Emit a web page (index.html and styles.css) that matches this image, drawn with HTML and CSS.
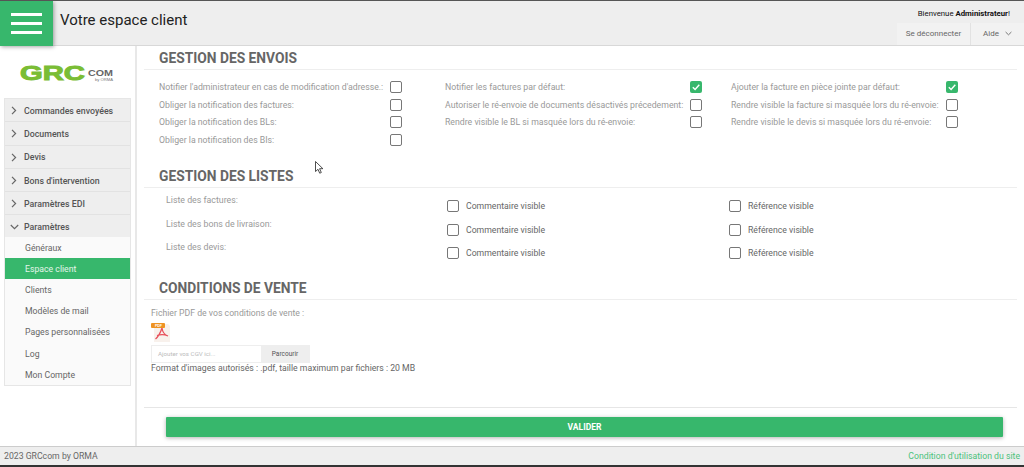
FILE: index.html
```html
<!DOCTYPE html>
<html lang="fr">
<head>
  <meta charset="UTF-8">
  <meta name="viewport" content="width=device-width, initial-scale=1.0">
  <title>Votre espace client</title>
  <link rel="stylesheet" href="styles.css">
</head>
<body>
  <header class="topbar">
    <button class="burger" type="button" aria-label="Menu">
      <span></span><span></span><span></span>
    </button>
    <div class="page-title">Votre espace client</div>
    <div class="user-box">
      <div class="welcome">Bienvenue <b>Administrateur</b>!</div>
      <div class="user-links">
        <a class="user-link logout">Se déconnecter</a>
        <a class="user-link help">Aide
          <svg class="chev" width="7" height="5" viewBox="0 0 7 5"><path d="M.6 1l2.900 2.800L6.400 1" fill="none" stroke="#777" stroke-width="1"/></svg>
        </a>
      </div>
    </div>
  </header>

  <div class="layout">
    <aside class="sidebar">
      <div class="logo">
        <svg class="logo-svg" width="100" height="26" viewBox="0 0 100 26">
          <text class="logo-grc" x="1" y="18" textLength="65" lengthAdjust="spacingAndGlyphs">GRC</text>
          <text class="logo-com" x="69" y="14" textLength="25" lengthAdjust="spacingAndGlyphs">COM</text>
          <text class="logo-by" x="76" y="18.500" textLength="18" lengthAdjust="spacingAndGlyphs">by ORMA</text>
        </svg>
      </div>
      <nav class="menu">
        <a class="menu-head"><svg class="arrow" width="6" height="9" viewBox="0 0 6 9"><path d="M1 .8l3.600 3.700L1 8.200" fill="none" stroke="#666" stroke-width="1.200"/></svg>Commandes envoyées</a>
        <a class="menu-head"><svg class="arrow" width="6" height="9" viewBox="0 0 6 9"><path d="M1 .8l3.600 3.700L1 8.200" fill="none" stroke="#666" stroke-width="1.200"/></svg>Documents</a>
        <a class="menu-head"><svg class="arrow" width="6" height="9" viewBox="0 0 6 9"><path d="M1 .8l3.600 3.700L1 8.200" fill="none" stroke="#666" stroke-width="1.200"/></svg>Devis</a>
        <a class="menu-head"><svg class="arrow" width="6" height="9" viewBox="0 0 6 9"><path d="M1 .8l3.600 3.700L1 8.200" fill="none" stroke="#666" stroke-width="1.200"/></svg>Bons d'intervention</a>
        <a class="menu-head"><svg class="arrow" width="6" height="9" viewBox="0 0 6 9"><path d="M1 .8l3.600 3.700L1 8.200" fill="none" stroke="#666" stroke-width="1.200"/></svg>Paramètres EDI</a>
        <a class="menu-head open"><svg class="arrow-down" width="9" height="6" viewBox="0 0 9 6"><path d="M.8 1l3.700 3.600L8.200 1" fill="none" stroke="#666" stroke-width="1.200"/></svg>Paramètres</a>
        <div class="submenu">
          <a class="sub-item">Généraux</a>
          <a class="sub-item active">Espace client</a>
          <a class="sub-item">Clients</a>
          <a class="sub-item">Modèles de mail</a>
          <a class="sub-item">Pages personnalisées</a>
          <a class="sub-item">Log</a>
          <a class="sub-item">Mon Compte</a>
        </div>
      </nav>
    </aside>

    <main class="content">
      <section class="block block-envois">
        <h2>GESTION DES ENVOIS</h2>
        <div class="options">
          <div class="opt-col col-a">
            <div class="opt"><span>Notifier l'administrateur en cas de modification d'adresse.:</span><i class="box"></i></div>
            <div class="opt"><span>Obliger la notification des factures:</span><i class="box"></i></div>
            <div class="opt"><span>Obliger la notification des BLs:</span><i class="box"></i></div>
            <div class="opt"><span>Obliger la notification des BIs:</span><i class="box"></i></div>
          </div>
          <div class="opt-col col-b">
            <div class="opt"><span>Notifier les factures par défaut:</span><i class="box checked"><svg width="12" height="12" viewBox="0 0 12 12"><path d="M2.800 6.200l2.300 2.300 4.200-4.800" fill="none" stroke="#fff" stroke-width="1.400"/></svg></i></div>
            <div class="opt"><span>Autoriser le ré-envoie de documents désactivés précedement:</span><i class="box"></i></div>
            <div class="opt"><span>Rendre visible le BL si masquée lors du ré-envoie:</span><i class="box"></i></div>
          </div>
          <div class="opt-col col-c">
            <div class="opt"><span>Ajouter la facture en pièce jointe par défaut:</span><i class="box checked"><svg width="12" height="12" viewBox="0 0 12 12"><path d="M2.800 6.200l2.300 2.300 4.200-4.800" fill="none" stroke="#fff" stroke-width="1.400"/></svg></i></div>
            <div class="opt"><span>Rendre visible la facture si masquée lors du ré-envoie:</span><i class="box"></i></div>
            <div class="opt"><span>Rendre visible le devis si masquée lors du ré-envoie:</span><i class="box"></i></div>
          </div>
        </div>
      </section>

      <section class="block block-listes">
        <h2>GESTION DES LISTES</h2>
        <div class="list-rows">
          <div class="list-row">
            <span class="list-name">Liste des factures:</span>
            <label class="check check-first"><i class="box"></i>Commentaire visible</label>
            <label class="check"><i class="box"></i>Référence visible</label>
          </div>
          <div class="list-row">
            <span class="list-name">Liste des bons de livraison:</span>
            <label class="check check-first"><i class="box"></i>Commentaire visible</label>
            <label class="check"><i class="box"></i>Référence visible</label>
          </div>
          <div class="list-row">
            <span class="list-name">Liste des devis:</span>
            <label class="check check-first"><i class="box"></i>Commentaire visible</label>
            <label class="check"><i class="box"></i>Référence visible</label>
          </div>
        </div>
      </section>

      <section class="block block-cgv">
        <h2>CONDITIONS DE VENTE</h2>
        <div class="cgv-body">
          <div class="cgv-label">Fichier PDF de vos conditions de vente :</div>
          <svg class="pdf-icon" width="20" height="19" viewBox="0 0 20 19">
            <path d="M3 1h14l2 2v16H3z" fill="#f8f1ec"/>
            <path d="M11 5c-1 3-3 8-6.500 11M11 5c.5 4 3 7 6 8M6 12.500c3-1 7-1.500 11 .5" fill="none" stroke="#e8505b" stroke-width="1.300"/>
            <rect x="0" y="0" width="14" height="5" rx="1" fill="#ee9322"/>
            <text class="pdf-tag" x="4" y="4">PDF</text>
          </svg>
          <div class="file-input">
            <span class="file-text">Ajouter vos CGV ici...</span>
            <span class="file-btn">Parcourir</span>
          </div>
          <div class="file-note">Format d'images autorisés : .pdf, taille maximum par fichiers : 20 MB</div>
        </div>
      </section>

      <div class="actions">
        <button class="submit" type="button">VALIDER</button>
      </div>
    </main>
  </div>

  <footer class="footer">
    <span>2023 GRCcom by ORMA</span>
    <a class="footer-link">Condition d'utilisation du site</a>
  </footer>

  <svg class="cursor" width="9" height="13" viewBox="0 0 9 13"><path d="M.5.5v10l2.500-2.200 1.700 3.900 1.600-.7L4.600 7.700h3.300z" fill="#fff" stroke="#222" stroke-width=".8"/></svg>
</body>
</html>
```

FILE: styles.css
```css
* {
  box-sizing: border-box;
}

html, body {
  height: 100%;
}

body {
  margin: 0;
  display: flex;
  flex-direction: column;
  height: 467px;
  overflow: hidden;
  background: #fff;
  color: #999;
  font-family: Roboto, "Liberation Sans", sans-serif;
  font-size: 10px;
  border-top: 1px solid #555;
  border-bottom: 2px solid #333;
  position: relative;
}

/* barre du haut */
.topbar {
  display: flex;
  height: 45px;
  flex: none;
  background: #eee;
  border-bottom: 1px solid #d8d8d8;
}

.burger {
  width: 53px;
  height: 45px;
  padding: 0 11px;
  border: none;
  background: #37b76c;
  box-shadow: 1px 1px 4px rgba(0, 0, 0, .35);
  display: flex;
  flex-direction: column;
  justify-content: center;
  gap: 5.500px;
}

.burger span {
  display: block;
  height: 3.500px;
  background: #fff;
}

.page-title {
  margin-left: 7px;
  padding-top: 10px;
  font-size: 15px;
  color: #222;
}

.user-box {
  margin-left: auto;
  width: 127px;
  display: flex;
  flex-direction: column;
}

.welcome {
  height: 22px;
  padding: 8px 14px 0 0;
  text-align: right;
  font-size: 7.800px;
  color: #111;
  white-space: nowrap;
}

.user-links {
  display: flex;
  height: 22px;
}

.user-link {
  display: flex;
  align-items: center;
  justify-content: center;
  padding-bottom: 1px;
  background: #f2f2f2;
  font-size: 8px;
  color: #666;
}

.logout {
  width: 74px;
  border-right: 1px solid #e2e2e2;
}

.help {
  flex: 1;
  gap: 6px;
}

/* colonne de gauche */
.layout {
  flex: 1;
  display: flex;
  min-height: 0;
}

.sidebar {
  width: 137px;
  flex: none;
  padding: 0 4px;
  border-right: 2px solid #e8e8e8;
}

.logo {
  height: 52px;
  padding: 16px 0 0 15px;
}

.logo-svg {
  overflow: visible;
}

.logo-grc {
  font-family: "Liberation Sans", sans-serif;
  font-weight: 700;
  font-size: 21px;
  fill: #7abd35;
  stroke: #7abd35;
  stroke-width: 1px;
}

.logo-com {
  font-family: "Liberation Sans", sans-serif;
  font-weight: 700;
  font-size: 9.500px;
  fill: #666;
}

.logo-by {
  font-family: "Liberation Sans", sans-serif;
  font-size: 3.500px;
  fill: #777;
}

.menu {
  border: 1px solid #e6e6e6;
  background: #fafafa;
}

.menu-head {
  display: flex;
  align-items: center;
  height: 23.300px;
  padding-left: 6px;
  padding-top: 1px;
  background: #eee;
  border-bottom: 1px solid #e2e2e2;
  font-size: 8.800px;
  font-weight: 500;
  color: #555;
}

.arrow {
  margin-right: 7px;
}

.arrow-down {
  margin-right: 5px;
  margin-left: -1px;
}

.menu-head.open {
  height: 21.500px;
  border-bottom: none;
}

.sub-item {
  display: flex;
  align-items: center;
  height: 21.200px;
  padding-left: 20px;
  font-size: 8.700px;
  color: #666;
}

.sub-item.active {
  background: #37b76c;
  color: #e4f5ea;
}

/* contenu */
.content {
  flex: 1;
  min-width: 0;
  padding: 0 7px;
  display: flex;
  flex-direction: column;
}

h2 {
  margin: 0;
  padding: 4px 0 3px 15px;
  height: 24px;
  font-size: 13.800px;
  line-height: 16px;
  font-weight: 700;
  color: #666;
  border-bottom: 1px solid #eee;
}

.options {
  display: flex;
  padding: 8px 0 0 15px;
}

.opt-col {
  flex: none;
  width: 286px;
}

.opt {
  display: flex;
  justify-content: space-between;
  align-items: center;
  height: 17.700px;
  font-size: 8.720px;
  color: #999;
  white-space: nowrap;
}

.col-a .opt {
  width: 243px;
}

.col-b .opt {
  width: 257px;
}

.col-c .opt {
  width: 227px;
}

.box {
  display: flex;
  align-items: center;
  justify-content: center;
  flex: none;
  width: 12px;
  height: 12px;
  border: 1.500px solid #777;
  border-radius: 2px;
  background: #fff;
}

.box.checked {
  border: none;
  background: #37b76c;
}

.block-envois {
  height: 118px;
}

.block-listes {
  height: 112px;
}

.list-rows {
  padding-top: 6px;
}

.list-row {
  display: flex;
  align-items: flex-start;
  height: 23.700px;
  font-size: 8.800px;
}

.list-name {
  width: 303px;
  padding: 1px 0 0 22px;
  color: #999;
}

.check {
  display: flex;
  align-items: center;
  gap: 7px;
  height: 24px;
  color: #666;
  font-size: 8.700px;
}

.check-first {
  width: 282px;
}

.cgv-body {
  padding: 8px 0 0 7px;
}

.cgv-label {
  font-size: 8.700px;
  color: #999;
}

.pdf-icon {
  display: block;
  margin-top: 5px;
}

.pdf-tag {
  font-family: "Liberation Sans", sans-serif;
  font-size: 3.500px;
  font-weight: 700;
  fill: #fff;
}

.file-input {
  display: flex;
  width: 159px;
  height: 18px;
  margin-top: 3px;
  border: 1px solid #eee;
}

.file-text {
  width: 109px;
  padding: 4px 0 0 6px;
  font-size: 6.200px;
  color: #bbb;
}

.file-btn {
  flex: 1;
  background: #eee;
  text-align: center;
  padding-top: 4px;
  font-size: 6.500px;
  color: #555;
}

.file-note {
  font-size: 8.700px;
  color: #666;
}

.actions {
  margin-top: auto;
  height: 39px;
  padding: 9px 14px 0 22px;
  border-top: 1px solid #e6e6e6;
}

.submit {
  display: block;
  width: 100%;
  height: 20px;
  border: none;
  border-radius: 1px;
  background: #37b76c;
  box-shadow: 0 1px 4px rgba(0, 0, 0, .3);
  color: #fff;
  font-family: Roboto, "Liberation Sans", sans-serif;
  font-size: 8.500px;
  font-weight: 700;
}

/* pied de page */
.footer {
  display: flex;
  flex: none;
  justify-content: space-between;
  align-items: center;
  height: 19px;
  padding: 0 4px;
  background: #eee;
  border-top: 1px solid #ccc;
  font-size: 8.700px;
  color: #666;
}

.footer-link {
  color: #4bc27c;
}

/* pointeur de souris */
.cursor {
  position: absolute;
  left: 315px;
  top: 160px;
}
```
